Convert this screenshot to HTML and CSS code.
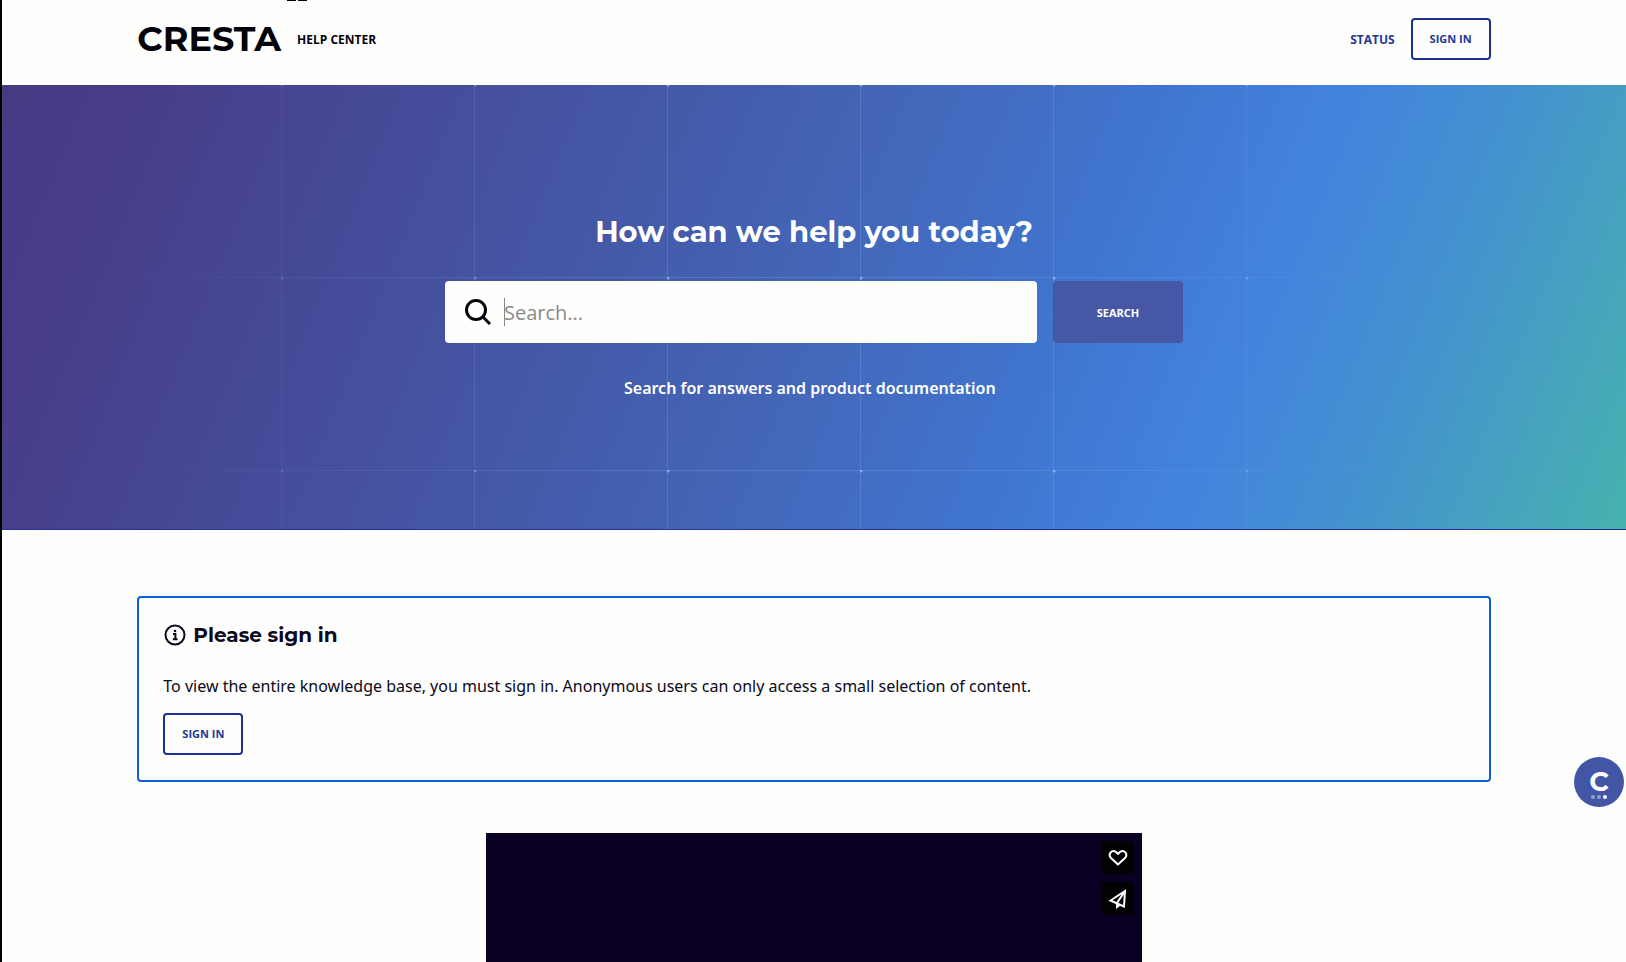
FILE: index.html
```html
<!DOCTYPE html>
<html lang="en">
<head>
	<title>Cresta Help Center</title>
	<meta charset="UTF-8">
	<meta name="viewport" content="width=device-width, initial-scale=1.0">
	<link rel="stylesheet" href="styles.css">
</head>
<body>
	<div class="top-marks"></div>
	<header class="header">
		<a class="brand" href="#">
			<span class="logo">CRESTA</span>
			<span class="brand-text">HELP CENTER</span>
		</a>
		<nav class="nav">
			<a class="nav-link" href="#">STATUS</a>
			<a class="btn" href="#">SIGN IN</a>
		</nav>
	</header>

	<section class="hero">
		<h1 class="hero-title">How can we help you today?</h1>
		<form class="search">
			<label class="search-box" for="query">
				<svg class="search-icon" viewBox="0 0 26 26" aria-label="Search">
					<circle cx="11" cy="11" r="9.5"/>
					<path d="M17.8 17.8 L25 25"/>
				</svg>
				<span class="caret"></span>
				<input class="search-input" id="query" type="text" placeholder="Search...">
			</label>
			<button class="search-btn" type="button">SEARCH</button>
		</form>
		<p class="hero-text">Search for answers and product documentation&nbsp;&nbsp;</p>
	</section>

	<main class="main">
		<section class="notice">
			<h2 class="notice-title">
				<svg class="info-icon" viewBox="0 0 24 24">
					<circle cx="12" cy="12" r="9.5"/>
					<path d="M10 11 H12.4 V16 M9.8 16.2 H14.6"/>
					<circle class="info-dot" cx="12" cy="8" r="1.3"/>
				</svg>
				Please sign in
			</h2>
			<p class="notice-text">To view the entire knowledge base, you must sign in. Anonymous users can only access a small selection of content.</p>
			<a class="btn" href="#">SIGN IN</a>
		</section>

		<div class="video">
			<button class="video-btn" type="button" aria-label="Like">
				<svg viewBox="0 0 20 20">
					<path d="M10 16.5 L3 10 C-0.5 6 4 1 8 4 L10 5.8 L12 4 C16 1 20.5 6 17 10 Z"/>
				</svg>
			</button>
			<button class="video-btn" type="button" aria-label="Share">
				<svg viewBox="0 0 20 20">
					<path d="M17 2 L2.5 11.5 L16 17.5 Z M17 2 L9 14 V18 L12 15.8"/>
				</svg>
			</button>
		</div>
	</main>

	<button class="chat" type="button" aria-label="Chat">
		<span class="chat-letter">C</span>
		<svg class="chat-dots" viewBox="0 0 18 4">
			<circle cx="3" cy="2" r="2" opacity="0.45"/>
			<circle cx="9" cy="2" r="2" opacity="0.45"/>
			<circle cx="15" cy="2" r="2"/>
		</svg>
	</button>
</body>
</html>
```
FILE: styles.css
```css
* {
	box-sizing: border-box;
}
body {
	margin: 0;
	border-left: 2px solid #000;
	background: #fefefd;
	color: #0b0820;
	font-family: "Open Sans", "Noto Sans", sans-serif;
	font-size: 16px;
	overflow-x: hidden;
}
a {
	text-decoration: none;
}
.top-marks {
	position: absolute;
	top: 0;
	left: 287px;
	width: 20px;
	height: 1px;
	background: linear-gradient(to right, #000 9px, transparent 9px 11px, #000 11px);
}
.header {
	display: flex;
	justify-content: space-between;
	align-items: center;
	height: 85px;
	padding: 0 calc(100% / 12) 7px;
}
.brand {
	display: flex;
	align-items: center;
	gap: 16px;
	color: #04030c;
}
.logo {
	font-family: Montserrat, Inter, sans-serif;
	font-size: 35px;
	font-weight: 700;
	line-height: 40px;
}
.brand-text {
	font-size: 12px;
	font-weight: 700;
}
.nav {
	display: flex;
	align-items: center;
	gap: 16px;
}
.nav-link {
	color: #233793;
	font-size: 12px;
	font-weight: 700;
}
.btn {
	display: inline-block;
	padding: 10px 17px;
	border: 2px solid #1c2f93;
	border-radius: 4px;
	color: #233793;
	font-size: 11px;
	font-weight: 700;
	line-height: 18px;
}

.hero {
	position: relative;
	display: flex;
	flex-direction: column;
	align-items: center;
	height: 445px;
	padding-top: 125px;
	color: #fff;
	background: linear-gradient(112deg, #453b83 0%, #473d89 8%, #464b98 22%, #4457a5 35%, #4466b8 50%, #4075cf 64%, #4282df 74%, #4491d0 84%, #47b2ae 100%);
	border-bottom: 1px solid #24309a;
}
/* faint grid, brighter dots where the lines cross */
.hero::before {
	content: "";
	position: absolute;
	inset: 0;
	background-image:
		radial-gradient(circle at 1px 1px, #7db6ee 0 1px, transparent 2px),
		linear-gradient(to right, #6f9ae066 1px, transparent 1px),
		linear-gradient(to bottom, #6f9ae066 1px, transparent 1px);
	background-size: 193px 193px;
	background-position: 86px -1px;
	-webkit-mask-image: linear-gradient(to right, transparent 5%, #000 45%, #000 65%, transparent 95%);
	mask-image: linear-gradient(to right, transparent 5%, #000 45%, #000 65%, transparent 95%);
}
.hero > * {
	position: relative;
}
.hero-title {
	margin: 0 0 27px;
	font-family: Montserrat, Inter, sans-serif;
	font-size: 29px;
	font-weight: 700;
	line-height: 44px;
}
.search {
	display: flex;
	gap: 16px;
	width: 738px;
	max-width: 100%;
}
.search-box {
	display: flex;
	flex: 1;
	align-items: center;
	height: 62px;
	padding: 0 20px;
	border-radius: 4px;
	background: #fefefd;
}
.search-icon {
	width: 26px;
	height: 26px;
	fill: none;
	stroke: #04030c;
	stroke-width: 3;
}
.caret {
	width: 1px;
	height: 28px;
	margin-left: 13px;
	margin-right: -1px;
	background: #888;
}
.search-input {
	flex: 1;
	min-width: 0;
	padding: 0;
	border: 0;
	outline: 0;
	background: none;
	font-family: inherit;
	font-size: 20px;
}
.search-input::placeholder {
	color: #8b8b8b;
}
.search-btn {
	width: 130px;
	border: 0;
	border-radius: 4px;
	background: #4557a5;
	color: #fff;
	font-family: inherit;
	font-size: 11px;
	font-weight: 700;
}
.hero-text {
	margin: 33px 0 0;
	font-family: "Noto Sans", sans-serif;
	font-weight: 600;
	line-height: 24px;
}

.main {
	padding: 66px calc(100% / 12) 0;
}
.notice {
	padding: 22px 24px 25px;
	border: 2px solid #0f5fd8;
	border-radius: 4px;
}
.notice-title {
	display: flex;
	align-items: center;
	gap: 6px;
	margin: 0 0 24px;
	font-family: Montserrat, Inter, sans-serif;
	font-size: 20px;
	font-weight: 700;
	line-height: 30px;
}
.info-icon {
	width: 24px;
	height: 24px;
	fill: none;
	stroke: #0b0820;
	stroke-width: 2;
}
.info-icon .info-dot {
	fill: #0b0820;
	stroke: none;
}
.notice-text {
	margin: 0 0 15px;
	font-family: "Noto Sans", sans-serif;
	line-height: 24px;
}
.notice .btn {
	vertical-align: top;
}

.video {
	display: flex;
	flex-direction: column;
	align-items: flex-end;
	gap: 8px;
	width: 656px;
	max-width: 100%;
	height: 369px;
	margin: 51px auto 0;
	padding: 8px;
	background: #090023;
}
.video-btn {
	display: flex;
	justify-content: center;
	align-items: center;
	width: 33px;
	height: 33px;
	padding: 0;
	border: 0;
	border-radius: 4px;
	background: #020104;
}
.video-btn svg {
	width: 20px;
	height: 20px;
	fill: none;
	stroke: #fff;
	stroke-width: 2;
}

.chat {
	position: fixed;
	right: 2px;
	bottom: 155px;
	display: flex;
	flex-direction: column;
	align-items: center;
	width: 50px;
	height: 50px;
	padding: 11px 0 0;
	border: 0;
	border-radius: 50%;
	background: #4356a6;
	color: #fff;
}
.chat-letter {
	font-family: Montserrat, Inter, sans-serif;
	font-size: 27px;
	font-weight: 700;
	line-height: 27px;
}
.chat-dots {
	width: 18px;
	height: 4px;
	fill: #fff;
}
```
